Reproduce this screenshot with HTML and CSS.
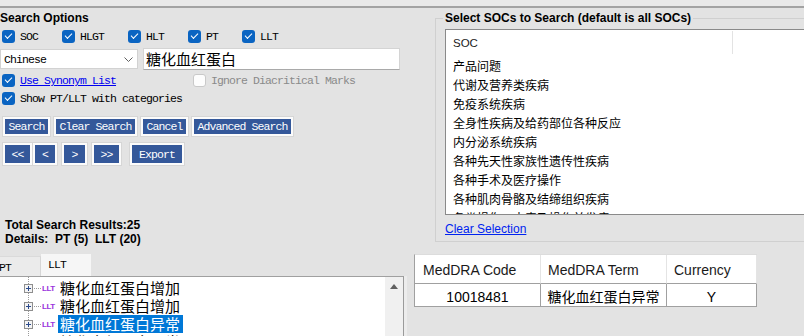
FILE: index.html
```html
<!DOCTYPE html>
<html lang="en">

<head>
  <meta charset="UTF-8">
  <meta name="viewport" content="width=device-width, initial-scale=1.0">
  <title>MedDRA Search</title>
  <link rel="stylesheet" href="styles.css">
</head>

<body>
  <div class="topbar"></div>

  <div class="upper">
    <div class="options">
      <div class="heading">Search Options</div>

      <div class="types mono">
        <span class="opt"><span class="cb"></span>SOC</span>
        <span class="opt"><span class="cb"></span>HLGT</span>
        <span class="opt"><span class="cb"></span>HLT</span>
        <span class="opt"><span class="cb"></span>PT</span>
        <span class="opt"><span class="cb"></span>LLT</span>
      </div>

      <div class="query">
        <div class="select mono">
          <span>Chinese</span>
          <svg class="chev" width="9" height="5" viewBox="0 0 9 5">
            <path d="M0.5 0.5 L4.5 4.5 L8.5 0.5" fill="none" stroke="#606060" stroke-width="1" />
          </svg>
        </div>
        <div class="textbox">糖化血红蛋白</div>
      </div>

      <div class="flags mono">
        <span class="opt synonym"><span class="cb"></span><a class="link" href="#">Use Synonym List</a></span>
        <span class="opt disabled"><span class="cb off"></span>Ignore Diacritical Marks</span>
      </div>
      <div class="flags second mono">
        <span class="opt"><span class="cb"></span>Show PT/LLT with categories</span>
      </div>

      <div class="buttons mono">
        <span class="btn">Search</span>
        <span class="btn">Clear Search</span>
        <span class="btn">Cancel</span>
        <span class="btn">Advanced Search</span>
      </div>

      <div class="pager mono">
        <span class="btn first">&lt;&lt;</span>
        <span class="btn prev">&lt;</span>
        <span class="btn next">&gt;</span>
        <span class="btn last">&gt;&gt;</span>
        <span class="btn export">Export</span>
      </div>

      <div class="totals">Total Search Results:25
Details:  PT (5)  LLT (20)</div>
    </div>

    <fieldset class="soc-group">
      <legend>Select SOCs to Search (default is all SOCs)</legend>
      <div class="listview">
        <div class="lv-head">
          <div class="lv-col">SOC</div>
        </div>
        <ul class="lv-items">
          <li>产品问题</li>
          <li>代谢及营养类疾病</li>
          <li>免疫系统疾病</li>
          <li>全身性疾病及给药部位各种反应</li>
          <li>内分泌系统疾病</li>
          <li>各种先天性家族性遗传性疾病</li>
          <li>各种手术及医疗操作</li>
          <li>各种肌肉骨骼及结缔组织疾病</li>
          <li>各类损伤、中毒及操作并发症</li>
        </ul>
      </div>
      <a class="clear-link" href="#">Clear Selection</a>
    </fieldset>
  </div>

  <div class="lower">
    <div class="results">
      <div class="tabs mono">
        <span class="tab">PT</span>
        <span class="tab cur">LLT</span>
      </div>
      <div class="tree">
        <ul class="tree-body">
          <li class="node">
            <svg class="expander" width="9" height="9" viewBox="0 0 9 9">
              <rect x="0.5" y="0.5" width="8" height="8" fill="#f4f4f4" stroke="#8e8e8e" />
              <path d="M2 4.5 H7 M4.5 2 V7" stroke="#2b4a8c" stroke-width="1" />
            </svg>
            <span class="dots"></span><span class="kind">LLT</span><span class="term">糖化血红蛋白增加</span>
          </li>
          <li class="node">
            <svg class="expander" width="9" height="9" viewBox="0 0 9 9">
              <rect x="0.5" y="0.5" width="8" height="8" fill="#f4f4f4" stroke="#8e8e8e" />
              <path d="M2 4.5 H7 M4.5 2 V7" stroke="#2b4a8c" stroke-width="1" />
            </svg>
            <span class="dots"></span><span class="kind">LLT</span><span class="term">糖化血红蛋白增加</span>
          </li>
          <li class="node">
            <svg class="expander" width="9" height="9" viewBox="0 0 9 9">
              <rect x="0.5" y="0.5" width="8" height="8" fill="#f4f4f4" stroke="#8e8e8e" />
              <path d="M2 4.5 H7 M4.5 2 V7" stroke="#2b4a8c" stroke-width="1" />
            </svg>
            <span class="dots"></span><span class="kind">LLT</span><span class="term selected">糖化血红蛋白异常</span>
          </li>
          <li class="node">
            <svg class="expander" width="9" height="9" viewBox="0 0 9 9">
              <rect x="0.5" y="0.5" width="8" height="8" fill="#f4f4f4" stroke="#8e8e8e" />
              <path d="M2 4.5 H7 M4.5 2 V7" stroke="#2b4a8c" stroke-width="1" />
            </svg>
            <span class="dots"></span><span class="kind">LLT</span><span class="term">糖化血红蛋白正常</span>
          </li>
        </ul>
        <div class="scroll"><span class="arrow-up"></span></div>
      </div>
    </div>

    <table class="detail">
      <thead>
        <tr>
          <th class="c-code">MedDRA Code</th>
          <th class="c-term">MedDRA Term</th>
          <th class="c-cur">Currency</th>
        </tr>
      </thead>
      <tbody>
        <tr>
          <td>10018481</td>
          <td>糖化血红蛋白异常</td>
          <td>Y</td>
        </tr>
      </tbody>
    </table>
  </div>
</body>

</html>
```

FILE: styles.css
```css
* {
  margin: 0;
  padding: 0;
  box-sizing: border-box;
}

li {
  list-style: none;
}

body {
  width: 804px;
  height: 336px;
  overflow: hidden;
  background-color: #e3e3e3;
  font-family: "Liberation Sans", Arial, "Noto Sans CJK SC", sans-serif;
  font-size: 12px;
  color: #000;
}

.mono {
  font-family: "Liberation Mono", "Noto Sans CJK SC", monospace;
  font-size: 11.5px;
  letter-spacing: -0.9px;
}

.topbar {
  height: 8px;
  background-color: #e9e9e9;
  border-bottom: 2px solid #a3a3a3;
}

/* 上半部分：搜索选项 + SOC 选择 */
.upper {
  display: flex;
  height: 246px;
}

.options {
  flex: none;
  width: 435px;
  padding-top: 3px;
}

.heading {
  font-weight: bold;
  line-height: 15px;
}

.types {
  display: flex;
  align-items: center;
  gap: 24px;
  height: 13px;
  margin-top: 4px;
  padding-left: 2px;
}

.opt {
  display: inline-flex;
  align-items: center;
  height: 13px;
  line-height: 13px;
  white-space: nowrap;
}

.cb {
  position: relative;
  flex: none;
  width: 13px;
  height: 13px;
  margin-right: 5px;
  border-radius: 3px;
  background-color: #0a64c2;
}

.cb::after {
  content: '';
  position: absolute;
  left: 3px;
  top: 3px;
  width: 6px;
  height: 3px;
  border-left: 1.3px solid #fff;
  border-bottom: 1.3px solid #fff;
  transform: rotate(-45deg);
}

.cb.off {
  background-color: #fdfdfd;
  border: 1px solid #c9c9c9;
}

.cb.off::after {
  display: none;
}

.query {
  display: flex;
  align-items: center;
  height: 22px;
  margin-top: 5px;
}

.select {
  display: flex;
  align-items: center;
  justify-content: space-between;
  width: 138px;
  height: 20px;
  padding: 0 4px 0 3px;
  background-color: #fff;
  border: 1px solid #d2d2d2;
}

.textbox {
  width: 257px;
  height: 22px;
  margin-left: 5px;
  padding-left: 2px;
  background-color: #fff;
  border: 1px solid #d4d4d4;
  border-bottom-color: #a9a9a9;
  font-family: "Noto Sans CJK SC", sans-serif;
  font-size: 15px;
  line-height: 19px;
}

.flags {
  display: flex;
  height: 13px;
  margin-top: 4px;
  padding-left: 2px;
}

.flags.second {
  margin-top: 5px;
}

.synonym {
  width: 191px;
}

.link {
  color: #0000f0;
  text-decoration: underline;
}

.disabled {
  color: #8a8a8a;
}

.buttons,
.pager {
  display: flex;
  gap: 4px;
  padding-left: 3px;
}

.buttons {
  height: 19px;
  margin-top: 12px;
}

.pager {
  height: 22px;
  margin-top: 7px;
  gap: 0;
}

.btn {
  display: inline-flex;
  align-items: center;
  justify-content: center;
  padding: 0 3.5px;
  border: 2px solid #fbfbfb;
  box-shadow: 0 0 0 1px #d6d6d6;
  background-color: #34589a;
  color: #fff;
  white-space: nowrap;
}

.pager .first {
  width: 29px;
}

.pager .prev {
  width: 24px;
  margin-left: 1px;
}

.pager .next {
  width: 25px;
  margin-left: 5px;
}

.pager .last {
  width: 29px;
  margin-left: 5px;
}

.pager .export {
  width: 54px;
  margin-left: 9px;
}

.totals {
  margin-top: 53px;
  padding-left: 5px;
  font-weight: bold;
  line-height: 14px;
  white-space: pre;
}

.soc-group {
  flex: none;
  width: 380px;
  margin-top: 3px;
  align-self: flex-start;
  padding: 0 0 4px 7px;
  border: 1px solid #d0d0d0;
}

.soc-group legend {
  padding: 0 2px;
  font-weight: bold;
  line-height: 15px;
}

.listview {
  width: 370px;
  height: 186px;
  margin: 3px 0 0 2px;
  background-color: #fff;
  border: 1px solid #8a8a8a;
  overflow: hidden;
}

.lv-head {
  display: flex;
  height: 26px;
}

.lv-col {
  width: 287px;
  height: 23px;
  margin-top: 1px;
  padding-left: 7px;
  border-right: 1px solid #e3e3e3;
  font-size: 11.5px;
  line-height: 25px;
  color: #222;
}

.lv-items {
  padding-left: 7px;
  font-family: "Noto Sans CJK SC", sans-serif;
  font-size: 12px;
  line-height: 19px;
  white-space: nowrap;
}

.clear-link {
  display: block;
  margin: 7px 0 0 2px;
  line-height: 15px;
  color: #0024f0;
  text-decoration: underline;
}

/* 下半部分：结果树 + 详情表 */
.lower {
  display: flex;
  height: 82px;
}

.results {
  flex: none;
  width: 404px;
}

.tabs {
  display: flex;
  align-items: flex-end;
  height: 22px;
  margin-left: -10px;
}

.tab {
  width: 51px;
  height: 20px;
  padding-left: 9px;
  line-height: 21px;
  background-color: #ebebeb;
  border-top: 1px solid #dadada;
  border-right: 1px solid #d6d6d6;
}

.tab.cur {
  width: 50px;
  height: 22px;
  padding-left: 7px;
  line-height: 22px;
  background-color: #f6f6f6;
  border: none;
}

.tree {
  display: flex;
  height: 60px;
  background-color: #fff;
  border-top: 1px solid #a0a0a0;
  border-right: 1px solid #9a9a9a;
  box-shadow: 3px 0 0 #ececec;
  overflow: hidden;
}

.tree-body {
  flex: 1;
  padding-top: 2px;
  background: linear-gradient(#9a9a9a 50%, transparent 50%) 28px 0 / 1px 2px repeat-y;
  font-family: "Noto Sans CJK SC", sans-serif;
  font-size: 15px;
}

.node {
  display: flex;
  align-items: center;
  height: 18px;
  padding-left: 24px;
  white-space: nowrap;
}

.expander {
  flex: none;
}

.dots {
  width: 7px;
  height: 1px;
  margin-left: 1px;
  background: linear-gradient(to right, #9a9a9a 50%, transparent 50%) 0 0 / 2px 1px repeat-x;
}

.kind {
  width: 17px;
  padding-left: 1px;
  font-family: "Liberation Sans", sans-serif;
  font-size: 8px;
  font-weight: bold;
  letter-spacing: -0.5px;
  color: #9a34dc;
}

.term {
  padding: 0 3px 0 2px;
  line-height: 18px;
}

.term.selected {
  background-color: #0078d7;
  color: #fff;
}

.scroll {
  flex: none;
  width: 18px;
  padding: 7px 0 0 5px;
  background-color: #f0f0f0;
}

.arrow-up {
  display: block;
  width: 0;
  height: 0;
  border-left: 4px solid transparent;
  border-right: 4px solid transparent;
  border-bottom: 5px solid #606060;
}

.detail {
  align-self: flex-start;
  width: 343px;
  margin-left: 10px;
  table-layout: fixed;
  border-spacing: 0;
  border-left: 1px solid #a0a0a0;
  border-top: 1px solid #dcdcdc;
  background-color: #fff;
  font-size: 14px;
  line-height: 16px;
}

.detail th {
  padding: 7px 4px 5px 8px;
  font-weight: normal;
  text-align: left;
  color: #1a1a1a;
  border-right: 1px solid #e4e4e4;
  border-bottom: 1px solid #a0a0a0;
  white-space: nowrap;
}

.detail .c-code,
.detail .c-term {
  width: 126px;
}

.detail .c-term,
.detail .c-cur {
  padding-left: 7px;
}

.detail .c-cur {
  width: 90px;
}

.detail td {
  padding: 5px 2px 1px;
  text-align: center;
  border-right: 1px solid #a0a0a0;
  border-bottom: 1px solid #a0a0a0;
  white-space: nowrap;
}
```
